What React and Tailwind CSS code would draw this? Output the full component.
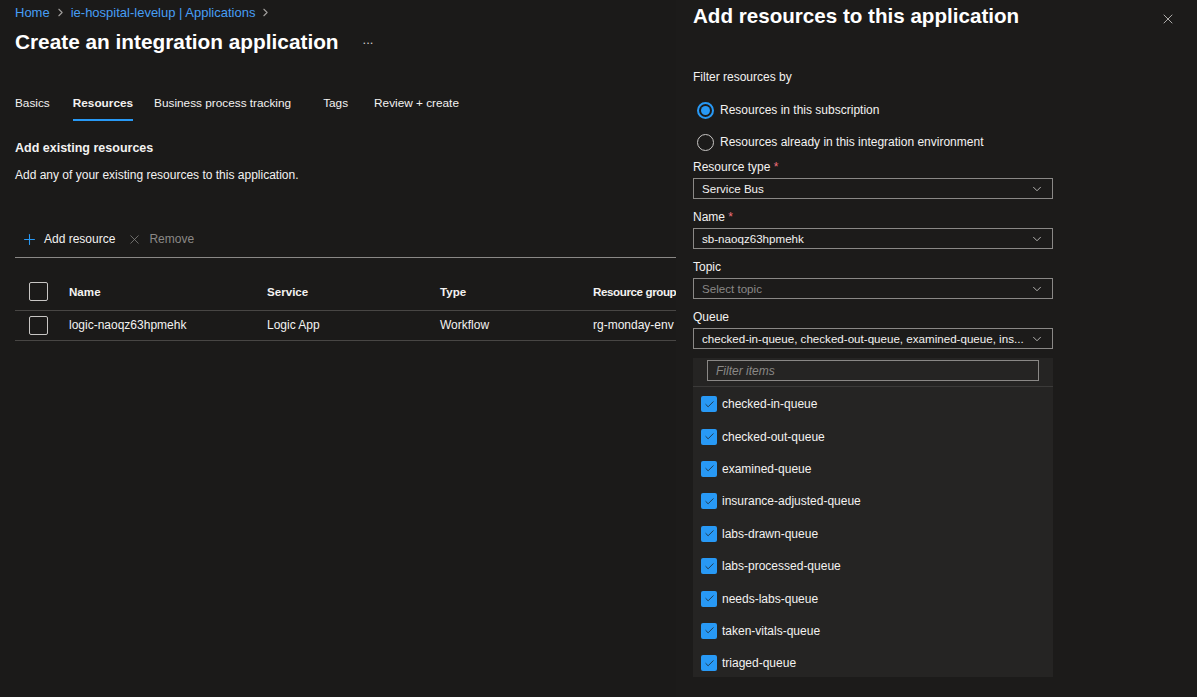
import { ChevronRight, ChevronDown, Plus, X, Check } from "lucide-react";

const queues = [
  "checked-in-queue",
  "checked-out-queue",
  "examined-queue",
  "insurance-adjusted-queue",
  "labs-drawn-queue",
  "labs-processed-queue",
  "needs-labs-queue",
  "taken-vitals-queue",
  "triaged-queue",
];

function Box() {
  return <div className="w-[19px] h-[19px] rounded-[2px] border border-[#c8c6c4]" />;
}

function Select({ value, muted }) {
  return (
    <div className="h-[21px] flex items-center justify-between border border-[#8a8886] px-2 mt-[3px] text-[11.6px]">
      <span className={`whitespace-nowrap ${muted ? "text-[#8a8886]" : "text-[#f3f2f1]"}`}>{value}</span>
      <ChevronDown size={14} strokeWidth={1.4} className="text-[#d2d0ce] shrink-0 ml-1" />
    </div>
  );
}

function Label({ children, req }) {
  return (
    <div className="text-[12px] text-[#f3f2f1] leading-4">
      {children}
      {req && <span className="text-[#f1707b]"> *</span>}
    </div>
  );
}

export default function App() {
  return (
    <div
      className="w-[1197px] h-[697px] flex bg-[#1b1a19] text-[#f3f2f1] overflow-hidden"
      style={{ fontFamily: "'Segoe UI', 'Liberation Sans', Arial, sans-serif" }}
    >
      {/* Main page */}
      <div className="w-[676px] shrink-0 pl-[15px] pt-[4px]">
        <div className="flex items-center text-[13px] text-[#479ef5] h-[17px]">
          <span>Home</span>
          <ChevronRight size={13} className="text-[#a19f9d] mx-[4px]" />
          <span>ie-hospital-levelup | Applications</span>
          <ChevronRight size={13} className="text-[#a19f9d] mx-[4px]" />
        </div>
        <div className="flex items-center mt-[8px] h-[26px]">
          <h1 className="text-[20.8px] font-semibold text-white">Create an integration application</h1>
          <span className="ml-[24px] text-[13px] text-[#d2d0ce] -mt-[4px]">...</span>
        </div>

        <div className="flex text-[11.8px] mt-[35px] h-[31px]">
          <div className="pt-[5px]">Basics</div>
          <div className="ml-[23px] pt-[5px] font-semibold border-b-2 border-[#2899f5] h-[31px]">Resources</div>
          <div className="ml-[21px] pt-[5px]">Business process tracking</div>
          <div className="ml-[32px] pt-[5px]">Tags</div>
          <div className="ml-[26px] pt-[5px]">Review + create</div>
        </div>

        <div className="mt-[18px] text-[12.5px] font-semibold">Add existing resources</div>
        <div className="mt-[8px] text-[12px]">Add any of your existing resources to this application.</div>

        <div className="mt-[38px] flex items-center h-[36px] text-[12px] border-b border-[#8a8886]">
          <Plus size={17} strokeWidth={1.5} className="text-[#2899f5] ml-[6px]" />
          <span className="ml-[6px]">Add resource</span>
          <X size={15} strokeWidth={1.2} className="text-[#8a8886] ml-[12px]" />
          <span className="ml-[7px] text-[#8a8886]">Remove</span>
        </div>

        <div className="mt-[16px] text-[12px]">
          <div className="grid grid-cols-[54px_198px_173px_153px_1fr] items-center h-[37px] border-b border-[#484644] font-semibold text-[11.6px]">
            <div className="pl-[14px]"><Box /></div>
            <div>Name</div>
            <div>Service</div>
            <div>Type</div>
            <div className="whitespace-nowrap tracking-[-0.4px]">Resource group</div>
          </div>
          <div className="grid grid-cols-[54px_198px_173px_153px_1fr] items-center h-[30px] border-b border-[#484644]">
            <div className="pl-[14px]"><Box /></div>
            <div>logic-naoqz63hpmehk</div>
            <div>Logic App</div>
            <div>Workflow</div>
            <div className="whitespace-nowrap">rg-monday-env</div>
          </div>
        </div>
      </div>

      {/* Side panel */}
      <div className="flex-1 bg-[#1c1b1a] pl-[17px] pr-[24px] text-[12px] relative">
        <div className="flex items-start justify-between pt-[2px]">
          <h2 className="text-[20.6px] font-semibold text-white leading-[28px]">Add resources to this application</h2>
          <X size={16} strokeWidth={1.2} className="text-[#d2d0ce] mt-[9px] mr-[-3px]" />
        </div>

        <div className="w-[360px]">
          <div className="mt-[39px] leading-4">Filter resources by</div>
          <div className="mt-[16px] flex items-center h-[18px] text-[12px]">
            <div className="w-[17px] h-[17px] rounded-full border-2 border-[#2899f5] flex items-center justify-center ml-[4px]">
              <div className="w-[9px] h-[9px] rounded-full bg-[#2899f5]" />
            </div>
            <span className="ml-[6px]">Resources in this subscription</span>
          </div>
          <div className="mt-[14px] flex items-center h-[18px]">
            <div className="w-[17px] h-[17px] rounded-full border border-[#c8c6c4] ml-[4px]" />
            <span className="ml-[6px]">Resources already in this integration environment</span>
          </div>

          <div className="mt-[8px]"><Label req>Resource type</Label><Select value="Service Bus" /></div>
          <div className="mt-[10px]"><Label req>Name</Label><Select value="sb-naoqz63hpmehk" /></div>
          <div className="mt-[10px]"><Label>Topic</Label><Select value="Select topic" muted /></div>
          <div className="mt-[10px]"><Label>Queue</Label><Select value="checked-in-queue, checked-out-queue, examined-queue, ins..." /></div>

          <div className="mt-[9px] bg-[#252423] h-[319px]">
            <div className="px-[14px] pt-[2px] pb-[5px] border-b border-[#3b3a39]">
              <div className="h-[21px] border border-[#8a8886] flex items-center px-2 italic text-[#8a8886]">Filter items</div>
            </div>
            <div className="pt-[1px]">
              {queues.map((q) => (
                <div key={q} className="h-[32.4px] flex items-center pl-[8px]">
                  <div className="w-[16px] h-[16px] rounded-[2px] bg-[#2899f5] flex items-center justify-center">
                    <Check size={11} strokeWidth={1.6} className="text-[#1b1a19]" />
                  </div>
                  <span className="ml-[5px] text-[12px]">{q}</span>
                </div>
              ))}
            </div>
          </div>
        </div>
      </div>
    </div>
  );
}
